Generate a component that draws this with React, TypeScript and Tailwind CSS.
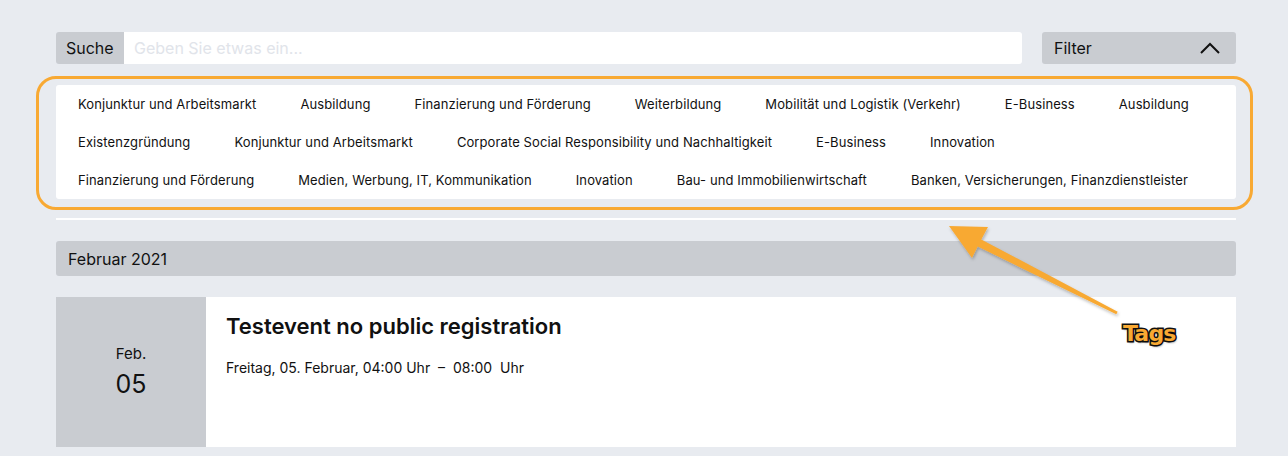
import React from "react";

const rows: string[][] = [
  ["Konjunktur und Arbeitsmarkt", "Ausbildung", "Finanzierung und Förderung", "Weiterbildung", "Mobilität und Logistik (Verkehr)", "E-Business", "Ausbildung"],
  ["Existenzgründung", "Konjunktur und Arbeitsmarkt", "Corporate Social Responsibility und Nachhaltigkeit", "E-Business", "Innovation"],
  ["Finanzierung und Förderung", "Medien, Werbung, IT, Kommunikation", "Inovation", "Bau- und Immobilienwirtschaft", "Banken, Versicherungen, Finanzdienstleister"],
];

export default function App() {
  return (
    <div className="relative h-[456px] w-[1288px] overflow-hidden bg-[#e8ebf0] font-['Inter','Noto_Sans',sans-serif] text-[#111]">
      <div className="pl-14 pr-[52px] pt-8">
        {/* search row */}
        <div className="flex h-8 gap-5">
          <div className="flex flex-1">
            <div className="flex w-[68px] items-center rounded-l-[3px] bg-[#c9ccd1] pl-[10px] text-[16px]">Suche</div>
            <div className="flex flex-1 items-center rounded-r-[3px] bg-white px-[10px] text-[16px] text-[#e1e4ea]">
              Geben Sie etwas ein...
            </div>
          </div>
          <div className="flex w-[194px] items-center justify-between rounded-[3px] bg-[#c9ccd1] pl-3 pr-4 text-[16px]">
            <span>Filter</span>
            <svg width="20" height="12" viewBox="0 0 20 12" fill="none">
              <path d="M1 11 L10 2 L19 11" stroke="#111" strokeWidth="2" />
            </svg>
          </div>
        </div>

        {/* tags */}
        <div className="relative mt-[21px] border-b-2 border-white pb-[19px]">
          <div className="rounded-[3px] bg-white">
            {rows.map((r, i) => (
              <div key={i} className="flex h-[38px] items-center">
                {r.map((t, j) => (
                  <span key={j} className="whitespace-nowrap px-[22px] text-[13px] leading-none tracking-[0.1px]">{t}</span>
                ))}
              </div>
            ))}
          </div>
          <div className="pointer-events-none absolute -left-5 -right-[17px] -top-[9px] bottom-[8px] rounded-[20px] border-[3px] border-[#f8a933]" />
        </div>

        {/* month */}
        <div className="mt-[21px] flex h-[35px] items-center rounded-[3px] bg-[#c9ccd1] px-3 text-[16px]">Februar 2021</div>

        {/* event */}
        <div className="mt-[21px] flex h-[150px] bg-white">
          <div className="flex w-[150px] flex-col items-center justify-center bg-[#c9ccd1] pb-[1px]">
            <span className="text-[15px] leading-[20px]">Feb.</span>
            <span className="mt-[5px] text-[25px] leading-[30px]">05</span>
          </div>
          <div className="px-5 pt-[17px]">
            <div className="text-[22px] font-semibold leading-[24px]">Testevent no public registration</div>
            <div className="mt-[22px] whitespace-pre text-[14px] leading-[16px]">Freitag, 05. Februar, 04:00 Uhr  –  08:00  Uhr</div>
          </div>
        </div>
      </div>

      {/* annotation arrow */}
      <svg className="pointer-events-none absolute left-0 top-0" width="1288" height="456">
        <defs>
          <filter id="sh" x="-20%" y="-20%" width="140%" height="140%">
            <feDropShadow dx="1" dy="2" stdDeviation="1.5" floodColor="#000" floodOpacity="0.25" />
          </filter>
        </defs>
        <polygon
          points="949,226 988,227 981.3,239.4 1117.7,311.7 1116.3,314.3 977.7,246.6 972,258"
          fill="#f8a933"
          filter="url(#sh)"
        />
      </svg>
      <span className="pointer-events-none absolute left-[1123px] top-[323px] font-['DejaVu_Sans',sans-serif] text-[22px] font-bold leading-none tracking-[-0.8px] text-[#f8a933] [-webkit-text-stroke:3px_#111] [paint-order:stroke_fill] [text-shadow:1px_2px_2px_rgba(0,0,0,0.35)]">
        Tags
      </span>
    </div>
  );
}
